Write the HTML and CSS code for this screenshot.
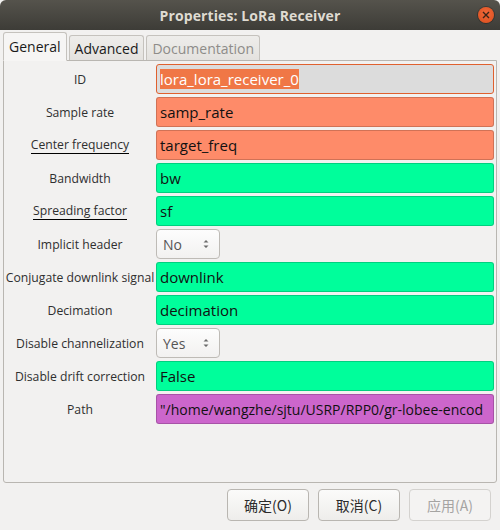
FILE: index.html
```html
<!DOCTYPE html>
<html>
<head>
<meta charset="utf-8">
<link rel="stylesheet" href="styles.css">
</head>
<body>
<div class="window">
  <div class="titlebar">
    <span class="spacer"></span>
    <span class="title">Properties: LoRa Receiver</span>
    <span class="close-wrap"><span class="close"><svg width="8" height="8" viewBox="0 0 8 8"><path d="M1 1L7 7M7 1L1 7" stroke="#3a2418" stroke-width="1.4"/></svg></span></span>
  </div>
  <div class="tabs">
    <div class="tab active">General</div>
    <div class="tab">Advanced</div>
    <div class="tab disabled">Documentation</div>
  </div>
  <div class="panel">
    <div class="grid">
      <div class="label">ID</div>
      <div class="field id-field"><span class="sel">lora_lora_receiver_0</span></div>

      <div class="label">Sample rate</div>
      <div class="field orange">samp_rate</div>

      <div class="label"><span class="ul">Center frequency</span></div>
      <div class="field orange">target_freq</div>

      <div class="label">Bandwidth</div>
      <div class="field green">bw</div>

      <div class="label"><span class="ul">Spreading factor</span></div>
      <div class="field green">sf</div>

      <div class="label">Implicit header</div>
      <div class="cell"><div class="combo"><span>No</span><svg width="8" height="12" viewBox="0 0 8 12"><path d="M1.5 4.5L4 2L6.5 4.5Z M1.5 7.5L4 10L6.5 7.5Z" fill="#6a6a6a"/></svg></div></div>

      <div class="label">Conjugate downlink signal</div>
      <div class="field green">downlink</div>

      <div class="label">Decimation</div>
      <div class="field green">decimation</div>

      <div class="label">Disable channelization</div>
      <div class="cell"><div class="combo"><span>Yes</span><svg width="8" height="12" viewBox="0 0 8 12"><path d="M1.5 4.5L4 2L6.5 4.5Z M1.5 7.5L4 10L6.5 7.5Z" fill="#6a6a6a"/></svg></div></div>

      <div class="label">Disable drift correction</div>
      <div class="field green">False</div>

      <div class="label">Path</div>
      <div class="field purple"><span class="path">"/home/wangzhe/sjtu/USRP/RPP0/gr-lobee-encod</span></div>
    </div>
  </div>
  <div class="buttons">
    <button class="btn">确定(O)</button>
    <button class="btn">取消(C)</button>
    <button class="btn disabled">应用(A)</button>
  </div>
</div>
</body>
</html>
```

FILE: styles.css
```css
html, body {
  margin: 0;
  padding: 0;
  background: #f2f1f0;
}
body {
  font-family: "Open Sans", "Noto Sans", "Noto Sans CJK SC", sans-serif;
  width: 500px;
  height: 530px;
  overflow: hidden;
}
.window {
  display: flex;
  flex-direction: column;
  height: 530px;
}
.titlebar {
  height: 30px;
  flex: none;
  display: grid;
  grid-template-columns: 1fr auto 1fr;
  align-items: center;
  background: linear-gradient(#55534c, #3d3c37);
  border-radius: 6px 6px 0 0;
}
.title {
  color: #dfdbd2;
  font-weight: bold;
  font-size: 14px;
  letter-spacing: 0.1px;
}
.close-wrap {
  display: flex;
  justify-content: flex-end;
  padding-right: 6px;
}
.close {
  width: 16px;
  height: 16px;
  border-radius: 50%;
  background: radial-gradient(circle at 50% 40%, #f3693a, #d94d1c);
  display: flex;
  align-items: center;
  justify-content: center;
  box-shadow: 0 0 0 1px rgba(0,0,0,0.25);
}
.tabs {
  display: flex;
  align-items: flex-end;
  gap: 2px;
  padding: 2px 0 0 3px;
  height: 28px;
  flex: none;
  position: relative;
  z-index: 1;
}
.tab {
  padding: 0 5px;
  display: flex;
  align-items: center;
  font-size: 14px;
  color: #1a1a1a;
  border: 1px solid #c5c2bd;
  border-bottom: none;
  border-radius: 3px 3px 0 0;
  background: linear-gradient(#eeedeb, #e4e2df);
  box-sizing: border-box;
  height: 25px;
}
.tab.active {
  height: 29px;
  background: #f6f5f4;
  padding: 0 5px;
  border-bottom: 1px solid #f6f5f4;
  margin-bottom: -1px;
}
.tab.disabled {
  color: #8e8c89;
}
.panel {
  margin: 0 3px;
  height: 423px;
  flex: none;
  box-sizing: border-box;
  border: 1px solid #b9b6b1;
  border-radius: 0 0 3px 3px;
  background: #f2f1f0;
  padding: 3px 2px 0 0;
}
.grid {
  display: grid;
  grid-template-columns: 152px 1fr;
  column-gap: 0;
  row-gap: 3px;
}
.label {
  height: 30px;
  display: flex;
  align-items: center;
  justify-content: center;
  font-size: 12.2px;
  color: #2f2f2f;
  white-space: nowrap;
}
.ul {
  border-bottom: 1px solid #000;
  line-height: 15px;
  padding-bottom: 1px;
}
.field {
  height: 30px;
  box-sizing: border-box;
  border: 1px solid rgba(0,0,0,0.18);
  border-radius: 3px;
  display: flex;
  align-items: center;
  padding-left: 3px;
  font-size: 15px;
  color: #111;
  white-space: nowrap;
  overflow: hidden;
}
.path {
  font-size: 14px;
}
.orange { background: #fe8b69; }
.green { background: #00fe9b; }
.purple { background: #cc66cc; }
.id-field {
  background: #dcdcdc;
  border: 1px solid #e0602e;
}
.sel {
  background: #f07746;
  color: #fff;
  line-height: 20px;
}
.cell {
  height: 30px;
}
.combo {
  width: 64px;
  height: 30px;
  box-sizing: border-box;
  border: 1px solid #bebbb6;
  border-radius: 4px;
  background: linear-gradient(#fdfdfd, #f2f1f0);
  display: flex;
  align-items: center;
  justify-content: space-between;
  padding: 0 9px 0 6px;
  font-size: 14px;
  color: #555;
}
.buttons {
  display: flex;
  justify-content: flex-end;
  gap: 9px;
  padding: 6px 9px 0 0;
}
.btn {
  width: 82px;
  height: 32px;
  font-family: "Noto Sans CJK SC", sans-serif;
  font-size: 14px;
  color: #2b2b2b;
  border: 1px solid #b9b6b1;
  border-radius: 4px;
  background: linear-gradient(#fbfbfa, #eeedeb);
  padding: 0;
}
.btn.disabled {
  color: #a5a4a2;
  border-color: #d4d2cf;
  background: #f4f3f2;
}
```
